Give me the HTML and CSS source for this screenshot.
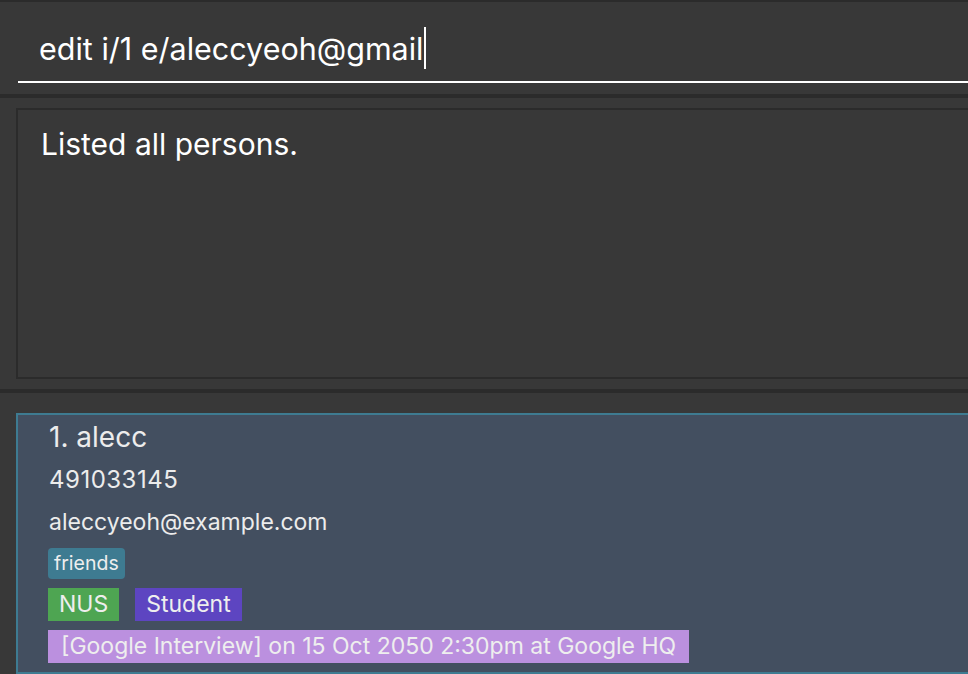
FILE: index.html
```html
<!DOCTYPE html>
<html>
<head>
<meta charset="utf-8">
<link rel="stylesheet" href="styles.css">
</head>
<body>
<div class="app">
  <section class="command">
    <div class="command-input"><span class="command-text">edit i/1 e/aleccyeoh@gmail</span><span class="caret"></span></div>
  </section>
  <div class="divider"></div>
  <section class="result">
    <div class="result-box">Listed all persons.</div>
  </section>
  <div class="divider"></div>
  <section class="list">
    <div class="card">
      <div class="name">1. alecc</div>
      <div class="field phone">491033145</div>
      <div class="field email">aleccyeoh@example.com</div>
      <div class="tags tags-first"><span class="tag tag-friends">friends</span></div>
      <div class="tags"><span class="tag tag-nus">NUS</span><span class="tag tag-student">Student</span></div>
      <div class="tags"><span class="tag tag-event">[Google Interview] on 15 Oct 2050 2:30pm at Google HQ</span></div>
    </div>
  </section>
</div>
</body>
</html>
```

FILE: styles.css
```css
* { box-sizing: border-box; }
html, body {
  margin: 0;
  padding: 0;
  background: #383838;
  overflow: hidden;
}
body {
  font-family: "Inter", "Noto Sans", sans-serif;
  color: #ffffff;
  width: 968px;
  height: 674px;
}
.app {
  display: flex;
  flex-direction: column;
  border-top: 2px solid #2b2b2b;
  height: 674px;
}
.command {
  height: 92px;
  padding: 0 0 0 18px;
}
.command-input {
  height: 81px;
  border-bottom: 2px solid #ffffff;
  padding: 29px 0 0 21px;
  display: flex;
  align-items: flex-start;
}
.command-text {
  font-size: 30.5px;
  line-height: 36px;
  color: #ffffff;
  white-space: nowrap;
}
.caret {
  width: 2px;
  height: 42px;
  background: #ffffff;
  margin-left: 0;
  margin-top: -4px;
}
.divider {
  height: 4px;
  background: #2b2b2b;
  flex: none;
}
.result {
  height: 291px;
  padding: 10px 0 0 16px;
}
.result-box {
  height: 271px;
  border: 2px solid #2b2b2b;
  border-right: none;
  padding: 16px 0 0 23px;
  font-size: 30px;
  line-height: 36px;
  color: #ffffff;
}
.list {
  flex: 1;
  padding: 20px 0 0 16px;
}
.card {
  height: 261px;
  background: #434f60;
  border: 2px solid #3e7b91;
  border-right: none;
  padding: 2px 0 0 30px;
  color: #ececec;
}
.name {
  font-size: 28px;
  line-height: 40px;
  padding-left: 1px;
}
.field {
  line-height: 42px;
  padding-left: 1px;
}
.phone {
  font-size: 24px;
  letter-spacing: 0.5px;
  margin-top: 2px;
}
.email {
  font-size: 23px;
}
.tags {
  display: flex;
  gap: 16px;
  margin-top: 9px;
}
.tags-first { margin-top: 5px; }
.tag {
  display: inline-block;
  color: #eeeeee;
  font-size: 23px;
  line-height: 33px;
  padding: 0 11px;
  white-space: nowrap;
}
.tag-friends {
  background: #3e7b91;
  border-radius: 4px;
  font-size: 19.5px;
  line-height: 31px;
  padding: 0 6px;
}
.tag-nus { background: #4ea552; }
.tag-student { background: #5d45c1; }
.tag-event { background: #bb90df; padding: 0 13px; }
```
